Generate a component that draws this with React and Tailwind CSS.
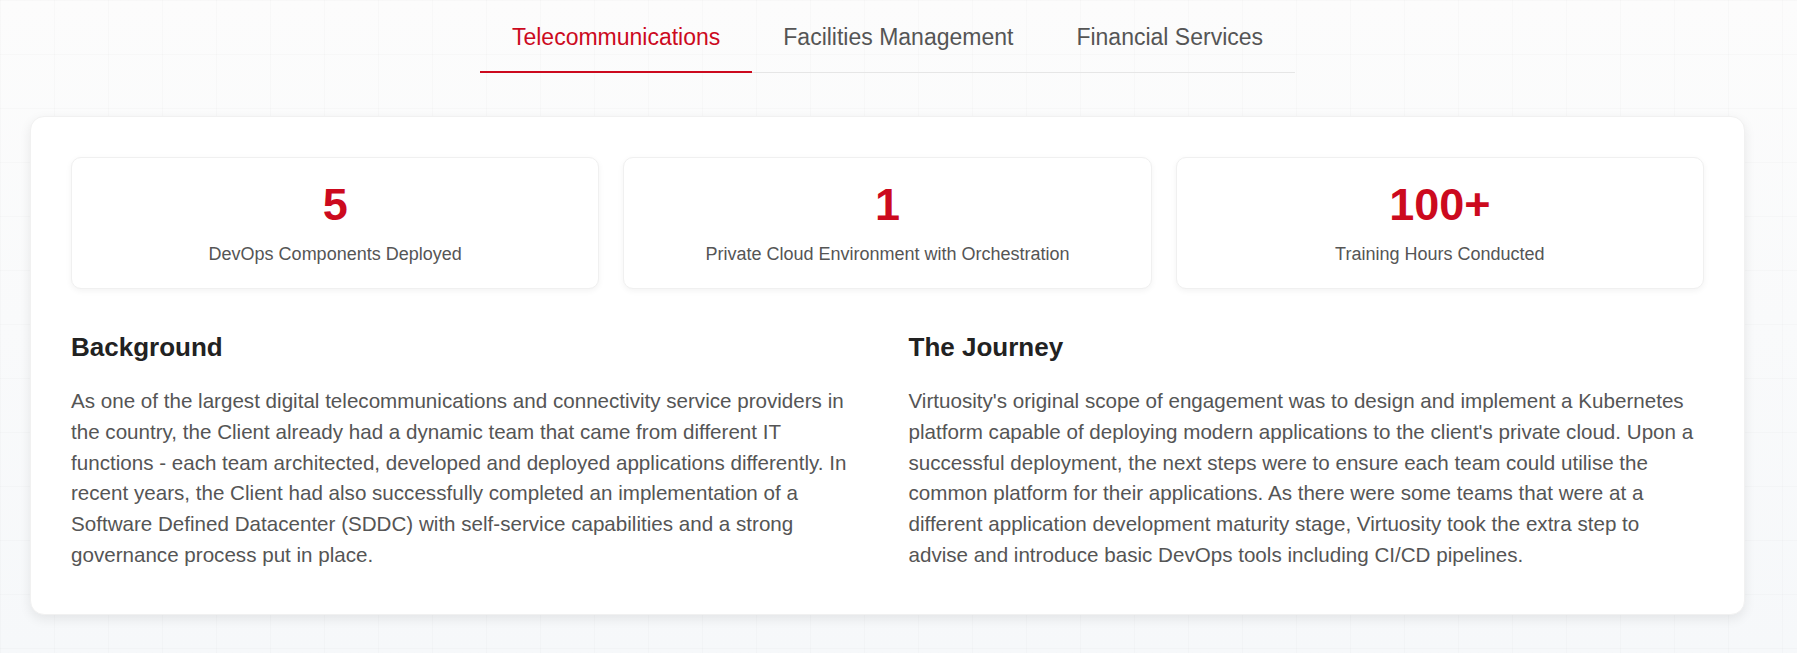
import React, { useState } from "react";

const TABS = ["Telecommunications", "Facilities Management", "Financial Services"];

const STATS = [
  { value: "5", label: "DevOps Components Deployed" },
  { value: "1", label: "Private Cloud Environment with Orchestration" },
  { value: "100+", label: "Training Hours Conducted" },
];

const SECTIONS = [
  {
    title: "Background",
    body: "As one of the largest digital telecommunications and connectivity service providers in the country, the Client already had a dynamic team that came from different IT functions - each team architected, developed and deployed applications differently. In recent years, the Client had also successfully completed an implementation of a Software Defined Datacenter (SDDC) with self-service capabilities and a strong governance process put in place.",
  },
  {
    title: "The Journey",
    body: "Virtuosity's original scope of engagement was to design and implement a Kubernetes platform capable of deploying modern applications to the client's private cloud. Upon a successful deployment, the next steps were to ensure each team could utilise the common platform for their applications. As there were some teams that were at a different application development maturity stage, Virtuosity took the extra step to advise and introduce basic DevOps tools including CI/CD pipelines.",
  },
];

export default function App() {
  const [active, setActive] = useState(0);

  return (
    <div className="min-h-[653px] bg-gradient-to-b from-[#fcfcfc] to-[#f6f8fa] font-['Liberation_Sans',Arial,sans-serif]">
      <div className="min-h-[653px] pl-[30px] pr-[52px] bg-[linear-gradient(to_right,rgba(0,0,0,0.014)_1px,transparent_1px),linear-gradient(to_bottom,rgba(0,0,0,0.014)_1px,transparent_1px)] bg-[size:54px_54px]">
        {/* Tabs */}
        <div className="mx-auto flex w-fit border-b border-[#e6e6e6]">
          {TABS.map((t, i) => (
            <button
              key={t}
              onClick={() => setActive(i)}
              className={`-mb-px border-b-2 px-[31.5px] pt-[23px] pb-[20px] text-[23px] leading-[28px] ${
                i === active ? "border-[#cc0a1e] text-[#cc0a1e]" : "border-transparent text-[#555]"
              }`}
            >
              {t}
            </button>
          ))}
        </div>

        {/* Card */}
        <div className="mt-[43px] rounded-[14px] border border-[#f1f1f1] bg-white px-10 pt-10 pb-[43px] shadow-[0_4px_12px_rgba(0,0,0,0.08)]">
          <div className="grid grid-cols-3 gap-6">
            {STATS.map((s) => (
              <div
                key={s.label}
                className="rounded-[10px] border border-[#f0f0f0] bg-white pt-[24px] pb-[20px] text-center shadow-[0_2px_6px_rgba(0,0,0,0.05)]"
              >
                <div className="text-[45px] font-bold leading-none text-[#cc0a1e]">{s.value}</div>
                <div className="mt-[14px] text-[18px] leading-[27px] text-[#555]">{s.label}</div>
              </div>
            ))}
          </div>

          <div className="mt-[43px] grid grid-cols-2 gap-[42px]">
            {SECTIONS.map((s) => (
              <div key={s.title}>
                <h2 className="text-[26px] font-bold leading-[30px] text-[#222]">{s.title}</h2>
                <p className="mt-[24px] text-[20.6px] leading-[30.8px] text-[#555]">{s.body}</p>
              </div>
            ))}
          </div>
        </div>
      </div>
    </div>
  );
}
